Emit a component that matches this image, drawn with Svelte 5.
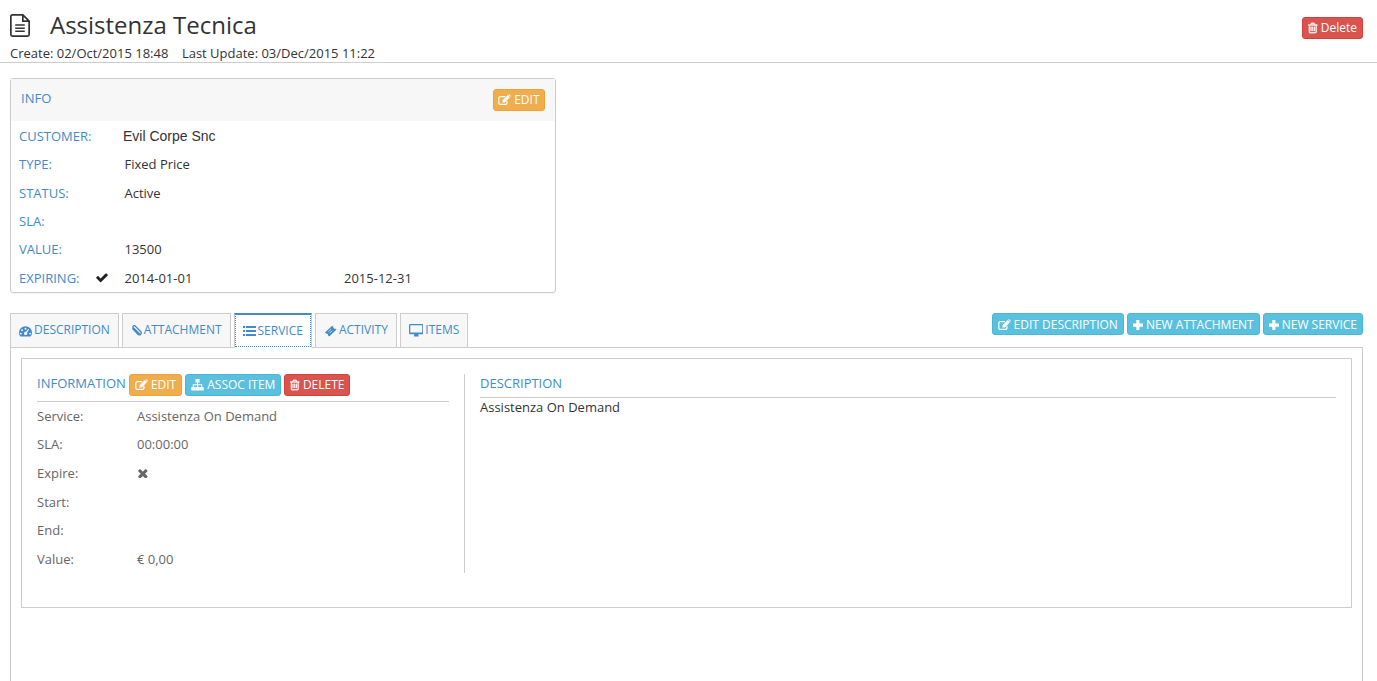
<script>
  const tabs = [
    { label: 'DESCRIPTION', icon: 'gauge' },
    { label: 'ATTACHMENT', icon: 'clip' },
    { label: 'SERVICE', icon: 'list', active: true },
    { label: 'ACTIVITY', icon: 'ticket' },
    { label: 'ITEMS', icon: 'desktop' }
  ];
  const info = [
    ['TYPE:', 'Fixed Price'],
    ['STATUS:', 'Active'],
    ['SLA:', ''],
    ['VALUE:', '13500']
  ];
  const service = [
    ['Service:', 'Assistenza On Demand'],
    ['SLA:', '00:00:00'],
    ['Expire:', 'x'],
    ['Start:', ''],
    ['End:', ''],
    ['Value:', '€ 0,00']
  ];
</script>

{#snippet icon(name)}
  {#if name === 'trash'}
    <svg class="ic" viewBox="0 0 1408 1792"><path fill="currentColor" stroke="currentColor" stroke-width="50" d="M512 736v576q0 14-9 23t-23 9h-64q-14 0-23-9t-9-23v-576q0-14 9-23t23-9h64q14 0 23 9t9 23zm256 0v576q0 14-9 23t-23 9h-64q-14 0-23-9t-9-23v-576q0-14 9-23t23-9h64q14 0 23 9t9 23zm256 0v576q0 14-9 23t-23 9h-64q-14 0-23-9t-9-23v-576q0-14 9-23t23-9h64q14 0 23 9t9 23zm128 724v-948h-896v948q0 22 7 40.500t14.500 27 10.500 8.500h832q3 0 10.500-8.500t14.500-27 7-40.500zm-672-1076h448l-48-117q-7-9-17-11h-317q-10 2-17 11zm928 32v64q0 14-9 23t-23 9h-96v948q0 83-47 143.500t-113 60.500h-832q-66 0-113-58.500t-47-141.500v-952h-96q-14 0-23-9t-9-23v-64q0-14 9-23t23-9h309l70-167q15-37 54-63t79-26h320q40 0 79 26t54 63l70 167h309q14 0 23 9t9 23z"/></svg>
  {:else if name === 'edit'}
    <svg class="ic edit" viewBox="0 0 16 14"><path fill="none" stroke="currentColor" stroke-width="1.500" d="M11 8.500V11a1.800 1.800 0 0 1-1.800 1.800H2.800A1.800 1.800 0 0 1 1 11V5a1.800 1.800 0 0 1 1.800-1.800h6"/><path fill="currentColor" d="M5.500 7.500 12 1.300l2.700 2.700-6.300 6.300H5.500zM12.800.7l.7-.7 2.500 2.500-.7.800z"/></svg>
  {:else if name === 'plus'}
    <svg class="ic plus" viewBox="100 200 1240 1240"><path fill="currentColor" d="M1408 736v192q0 40-28 68t-68 28h-416v416q0 40-28 68t-68 28h-192q-40 0-68-28t-28-68v-416h-416q-40 0-68-28t-28-68v-192q0-40 28-68t68-28h416v-416q0-40 28-68t68-28h192q40 0 68 28t28 68v416h416q40 0 68 28t28 68z"/></svg>
  {:else if name === 'sitemap'}
    <svg class="ic sitemap" viewBox="0 0 14 13"><path fill="currentColor" d="M4.700 0h4.600v4H7.700v2H12.300v3h1.700v4H9.500V9h1.700V7H7.600v2h1.700v4H4.700V9h1.700V7H2.800v2h1.700v4H0V9h1.700V6h4.600V4H4.700z"/></svg>
  {:else if name === 'gauge'}
    <svg class="ic gauge" viewBox="0 0 16 14"><path fill="currentColor" fill-rule="evenodd" d="M8 1a8 8 0 0 1 8 8c0 1.600-.4 3-1.200 4.300-.2.300-.4.400-.7.400H1.900c-.3 0-.5-.1-.7-.4A8 8 0 0 1 0 9a8 8 0 0 1 8-8zM8 3a1.200 1.200 0 1 0 0 2.400A1.200 1.200 0 0 0 8 3zM3.800 4.800a1.200 1.200 0 1 0 0 2.400 1.200 1.200 0 0 0 0-2.400zM2.300 9a1.200 1.200 0 1 0 0 2.400 1.200 1.200 0 0 0 0-2.400zM13.700 9a1.200 1.200 0 1 0 0 2.400 1.200 1.200 0 0 0 0-2.400zM11.500 4.500 8.500 8a2 2 0 1 0 1.400 1l2.500-4z"/></svg>
  {:else if name === 'clip'}
    <svg class="ic clip" viewBox="0 0 14 14"><path fill="none" stroke="currentColor" stroke-width="1.600" d="M12 12.200 3 3.500a1.600 1.600 0 0 1 2.400-2.300l7.400 7.400a2.500 2.500 0 0 1-3.500 3.500L1.600 4.300"/><path fill="none" stroke="currentColor" stroke-width="1.300" d="M4 5.500l6 6.200"/></svg>
  {:else if name === 'list'}
    <svg class="ic list" viewBox="0 0 13 10"><path fill="currentColor" d="M0 0h2.200v2H0zM3 0h10v2H3zM0 4h2.200v2H0zM3 4h10v2H3zM0 8h2.200v2H0zM3 8h10v2H3z"/></svg>
  {:else if name === 'ticket'}
    <svg class="ic ticket" viewBox="0 0 14 14"><path fill="currentColor" d="M9 .8l1.400 1.400a1.500 1.500 0 0 0 2 2L13.800 5.600 5.400 13.500 4 12.100a1.500 1.500 0 0 0-2-2L.6 8.700z"/><path stroke="#f7f7f7" stroke-width=".9" d="M4.500 8l3-3M6 9.500l3-3"/></svg>
  {:else if name === 'desktop'}
    <svg class="ic desktop" viewBox="0 0 15 13"><path fill="currentColor" fill-rule="evenodd" d="M1.300 0h12.400c.7 0 1.300.6 1.300 1.300v8c0 .7-.6 1.300-1.300 1.300H9.500c0 .8.500 1.200.5 1.800 0 .3-.2.600-.5.600h-4c-.3 0-.5-.3-.5-.6 0-.6.500-1 .5-1.800H1.300C.6 10.600 0 10 0 9.300v-8C0 .6.600 0 1.300 0zm0 1.200v7.600h12.400V1.200z"/></svg>
  {/if}
{/snippet}

<div class="page">
  <header class="top">
    <div class="title-area">
      <div class="title-row">
        <svg class="file" viewBox="0 0 21 24"><path fill="none" stroke="#333" stroke-width="1.800" d="M13.500.9H2.500A1.600 1.600 0 0 0 .9 2.500v19a1.600 1.600 0 0 0 1.600 1.600h16a1.600 1.600 0 0 0 1.600-1.600V7.500zM13.500.9v6.600h6.600"/><path stroke="#333" stroke-width="1.600" d="M5.500 11.500h10M5.500 14.800h10M5.500 18h10"/></svg>
        <h1>Assistenza Tecnica</h1>
      </div>
      <div class="dates"><span>Create: 02/Oct/2015 18:48</span><span>Last Update: 03/Dec/2015 11:22</span></div>
    </div>
    <button class="btn red top-del">{@render icon('trash')} Delete</button>
  </header>

  <section class="panel">
    <div class="panel-head">
      <span class="blue">INFO</span>
      <button class="btn orange">{@render icon('edit')} EDIT</button>
    </div>
    <div class="panel-body">
      <div class="irow first"><span class="blue lbl">CUSTOMER:</span><span class="cust">Evil Corpe Snc</span></div>
      {#each info as [k, v]}
        <div class="irow"><span class="blue lbl">{k}</span><span class="val">{v}</span></div>
      {/each}
      <div class="irow last">
        <span class="blue lbl exp">EXPIRING:
          <svg class="check" viewBox="100 300 1600 1300"><path fill="#222" d="M1671 566q0 40-28 68l-724 724-136 136q-28 28-68 28t-68-28l-136-136-362-362q-28-28-28-68t28-68l136-136q28-28 68-28t68 28l294 295 656-657q28-28 68-28t68 28l136 136q28 28 28 68z"/></svg>
        </span>
        <span class="val d1">2014-01-01</span><span class="val">2015-12-31</span>
      </div>
    </div>
  </section>

  <div class="tabbar">
    <ul class="tabs">
      {#each tabs as t}
        <li class:active={t.active}>{@render icon(t.icon)} {t.label}</li>
      {/each}
    </ul>
    <div class="actions">
      <button class="btn cyan">{@render icon('edit')} EDIT DESCRIPTION</button>
      <button class="btn cyan">{@render icon('plus')} NEW ATTACHMENT</button>
      <button class="btn cyan">{@render icon('plus')} NEW SERVICE</button>
    </div>
  </div>

  <div class="pane">
    <div class="box">
      <div class="left">
        <div class="lhead">
          <span class="blue info-t">INFORMATION</span>
          <button class="btn orange">{@render icon('edit')} EDIT</button>
          <button class="btn cyan">{@render icon('sitemap')} ASSOC ITEM</button>
          <button class="btn red">{@render icon('trash')} DELETE</button>
        </div>
        <div class="srows">
          {#each service as [k, v]}
            <div class="srow">
              <span class="skey">{k}</span>
              <span>
                {#if v === 'x'}
                  <svg class="times" viewBox="150 220 1340 1340"><path fill="#666" d="M1490 1322q0 40-28 68l-136 136q-28 28-68 28t-68-28l-294-294-294 294q-28 28-68 28t-68-28l-136-136q-28-28-28-68t28-68l294-294-294-294q-28-28-28-68t28-68l136-136q28-28 68-28t68 28l294 294 294-294q28-28 68-28t68 28l136 136q28 28 28 68t-28 68l-294 294 294 294q28 28 28 68z"/></svg>
                {:else}{v}{/if}
              </span>
            </div>
          {/each}
        </div>
      </div>
      <div class="right">
        <div class="rhead blue">DESCRIPTION</div>
        <div class="rtext">Assistenza On Demand</div>
      </div>
    </div>
  </div>
</div>

<style>
  :global(body) {
    margin: 0;
    background: #fff;
    overflow: hidden;
  }
  .page {
    height: 681px;
    overflow: hidden;
    font-family: "Open Sans", sans-serif;
    font-size: 13px;
    line-height: 18.5px;
    color: #333;
  }
  .blue { color: #428bca; }
  .top {
    display: flex;
    justify-content: space-between;
    height: 62px;
    padding: 0 14px 0 10px;
    border-bottom: 1px solid #ccc;
  }
  .title-row {
    display: flex;
    align-items: center;
    height: 44px;
    padding-top: 6px;
    box-sizing: border-box;
  }
  .file { width: 20px; height: 23px; }
  h1 {
    margin: 0 0 0 20px;
    font-size: 24px;
    font-weight: 400;
    line-height: 30px;
  }
  .dates {
    display: flex;
    gap: 13.5px;
  }
  .btn {
    display: inline-flex;
    align-items: center;
    justify-content: center;
    gap: 3px;
    box-sizing: border-box;
    height: 22px;
    padding: 0 5px;
    font: inherit;
    font-size: 12px;
    color: #fff;
    border: 1px solid;
    border-radius: 3px;
    white-space: nowrap;
  }
  .red { background: #d9534f; border-color: #d43f3a; }
  .orange { background: #f0ad4e; border-color: #eea236; }
  .cyan { background: #5bc0de; border-color: #46b8da; }
  .top-del { margin-top: 17px; }
  .ic { width: 9.500px; height: 12px; flex: none; }
  .ic.edit { width: 13px; height: 11.500px; }
  .ic.plus { width: 10px; height: 10px; }
  .ic.sitemap { width: 13px; height: 11.500px; }
  .ic.gauge { width: 13px; height: 12px; }
  .ic.clip { width: 10.800px; height: 11px; }
  .ic.list { width: 13px; height: 10px; }
  .ic.ticket { width: 13px; height: 12px; }
  .ic.desktop { width: 14.500px; height: 12.500px; }
  .panel {
    box-sizing: border-box;
    width: 546px;
    height: 215px;
    margin: 15px 0 0 10px;
    border: 1px solid #ccc;
    border-radius: 3px;
    box-shadow: 0 1px 1px rgba(0,0,0,.05);
  }
  .panel-head {
    display: flex;
    justify-content: space-between;
    align-items: center;
    height: 42px;
    padding: 0 10px;
    background: #f7f7f7;
  }
  .panel-head .blue { position: relative; top: -2px; }
  .panel-head .btn { padding: 0 4.500px; }
  .panel-body { padding: .8px 8px 0; }
  .irow {
    display: flex;
    align-items: center;
    height: 28.400px;
  }
  .lbl { width: 105.500px; flex: none; }
  .exp { display: flex; align-items: center; justify-content: space-between; width: 89px; margin-right: 16.500px; }
  .check { width: 12px; height: 10px; }
  .cust {
    font-family: "Liberation Sans", sans-serif;
    font-size: 14px;
    margin-left: -1.500px;
  }
  .d1 { width: 219.500px; }
  .tabbar {
    display: flex;
    justify-content: space-between;
    align-items: flex-start;
    margin: 20px 14px 0 10px;
    height: 34px;
  }
  .tabs {
    display: flex;
    gap: 3px;
    margin: 0;
    padding: 0;
    list-style: none;
  }
  .tabs li {
    display: flex;
    align-items: center;
    gap: 2px;
    box-sizing: border-box;
    height: 35px;
    padding: 0 8px;
    background: #f7f7f7;
    border: 1px solid #ccc;
    color: #428bca;
    font-size: 12px;
    white-space: nowrap;
  }
  .tabs li.active {
    background: #fff;
    border-top: 2px solid #428bca;
    border-bottom-color: #fff;
    outline: 1px dotted #428bca;
    outline-offset: -2px;
    position: relative;
    z-index: 1;
  }
  .actions { display: flex; gap: 3px; }
  .actions .btn { padding-top: 2px; }
  .actions .ic { margin-top: -1px; }
  .pane {
    box-sizing: border-box;
    height: 400px;
    margin: 0 14px 0 10px;
    padding: 10px;
    border: 1px solid #ccc;
  }
  .box {
    display: flex;
    box-sizing: border-box;
    height: 250px;
    padding: 15px;
    border: 1px solid #ccc;
  }
  .left {
    box-sizing: border-box;
    width: 428px;
    height: 199px;
    padding-right: 15px;
    border-right: 1px solid #ccc;
    flex: none;
    color: #666;
  }
  .lhead {
    display: flex;
    align-items: center;
    gap: 3px;
    height: 22px;
    padding-bottom: 5px;
    border-bottom: 1px solid #ccc;
  }
  .lhead .red { padding-right: 4.500px; }
  .info-t { position: relative; top: -2px; }
  .srows { margin-top: -.25px; }
  .srow {
    display: flex;
    align-items: center;
    height: 28.600px;
  }
  .skey { width: 100px; flex: none; }
  .times { display: block; width: 10.500px; height: 10.500px; }
  .right { flex: 1; padding-left: 15px; }
  .rhead {
    height: 23px;
    border-bottom: 1px solid #ccc;
  }
  .rtext { color: #333; }
</style>
